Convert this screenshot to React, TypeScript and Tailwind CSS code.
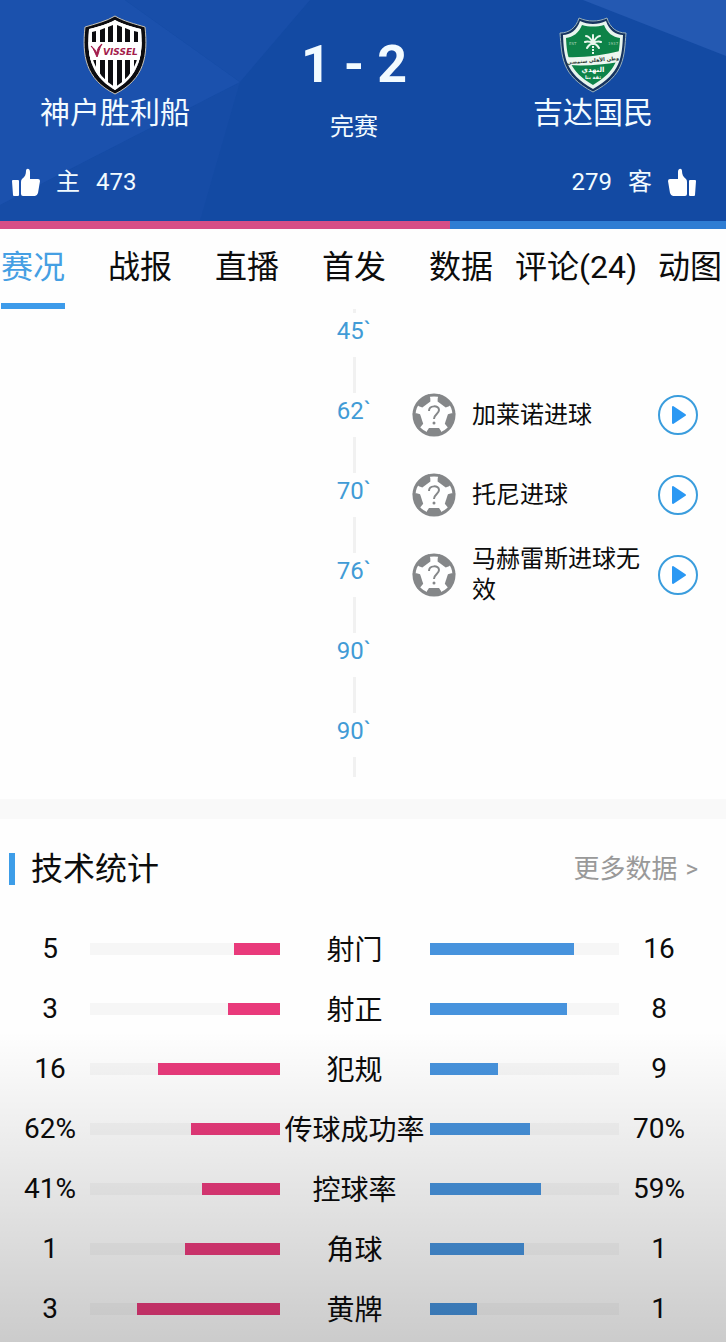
import { twMerge } from "tailwind-merge";

const tabs = ["赛况", "战报", "直播", "首发", "数据", "评论(24)", "动图"];

const events = [
	{ time: "45`" },
	{ time: "62`", text: "加莱诺进球" },
	{ time: "70`", text: "托尼进球" },
	{ time: "76`", text: "马赫雷斯进球无效" },
	{ time: "90`" },
	{ time: "90`" },
];

const stats = [
	{ label: "射门", home: 5, away: 16 },
	{ label: "射正", home: 3, away: 8 },
	{ label: "犯规", home: 16, away: 9 },
	{ label: "传球成功率", home: 62, away: 70, unit: "%" },
	{ label: "控球率", home: 41, away: 59, unit: "%" },
	{ label: "角球", home: 1, away: 1 },
	{ label: "黄牌", home: 3, away: 1 },
];

function HeaderBackdrop() {
	return (
		<svg
			className="absolute inset-0 h-full w-full -z-10"
			viewBox="0 0 726 221"
			preserveAspectRatio="none"
			aria-hidden="true"
		>
			<rect width="726" height="221" fill="#134aa3" />
			<path d="M0 205L240 82L200 221H0Z" fill="#164ca6" />
			<path d="M0 0H125L240 82L0 205Z" fill="#1b51ad" />
			<path d="M125 0H310L240 82Z" fill="#184ea9" />
			<path d="M583 0H726V56Z" fill="#2459b2" />
		</svg>
	);
}

function VisselCrest() {
	return (
		<svg width="66" height="80" viewBox="0 0 66 80" aria-label="Vissel Kobe">
			<defs>
				<clipPath id="vissel-inner">
					<path d="M33 5C40 9 50 12 59 14C61 38 59 60 33 75C7 60 5 38 7 14C16 12 26 9 33 5Z" />
				</clipPath>
			</defs>
			<path
				d="M33 1C41 6 53 9 63 12C66 40 63 64 33 79C3 64 0 40 3 12C13 9 25 6 33 1Z"
				fill="#0c0c10"
				stroke="#c9c4b8"
				strokeWidth="1"
			/>
			<g clipPath="url(#vissel-inner)">
				<rect width="66" height="80" fill="#fff" />
				{/* stripes stop short of the border, leaving a white rim */}
				<path
					d="M10 17L14 16V70H10ZM18 15L23 13V70H18ZM26 12L31 10V73H26ZM35 10L40 12V73H35ZM43 13L48 15V70H43ZM52 16L56 17V70H52Z"
					fill="#0c0c10"
				/>
				<path
					d="M33 6C40 10 50 13 58 15C60 38 58 59 33 74C8 59 6 38 8 15C16 13 26 10 33 6Z"
					fill="none"
					stroke="#fff"
					strokeWidth="3"
				/>
				<rect y="27" width="66" height="18" fill="#fff" />
			</g>
			<path
				d="M9 31C12 33 14 36 15 39C15 34 17 31 20 29C17 33 17 38 15 42C13 38 12 34 9 31Z"
				fill="#a31b4b"
				stroke="#a31b4b"
				strokeWidth="1"
			/>
			<text
				x="21"
				y="40"
				fontSize="9"
				fontWeight="700"
				fontStyle="italic"
				fontFamily="DejaVu Sans, sans-serif"
				fill="#a31b4b"
			>
				VISSEL
			</text>
		</svg>
	);
}

function AhliCrest() {
	return (
		<svg width="68" height="76" viewBox="0 0 68 76" aria-label="Al Ahli">
			<path
				d="M20 1C29 5 39 5 48 1C51 11 58 16 67 16C65 40 66 58 34 75C2 58 3 40 1 16C10 16 17 11 20 1Z"
				fill="#17345f"
				stroke="#9bb3bd"
				strokeWidth="1"
			/>
			<path
				d="M21 4C29 8 39 8 47 4C50 13 57 18 64 18C63 40 62 56 34 72C6 56 5 40 4 18C11 18 18 13 21 4Z"
				fill="#e8f4ee"
			/>
			<path
				d="M23 8C30 10 38 10 45 8C48 16 54 20 61 21C60 40 58 54 34 68C10 54 8 40 7 21C14 20 20 16 23 8Z"
				fill="#0d8348"
			/>
			<path d="M7 40C24 41 44 38 61 34L60 45C43 48 25 49 10 48Z" fill="#eef6f0" />
			<g stroke="#e8f6ec" strokeWidth="2" strokeLinecap="round" fill="none">
				<path d="M34 26V37" strokeDasharray="2 1" strokeLinecap="butt" />
				<path d="M34 26C31 20 29 19 27 19M34 26C37 20 39 19 41 19M34 26C30 24 28 24 26 25M34 26C38 24 40 24 42 25M34 26C31 27 29 29 28 31M34 26C37 27 39 29 40 31M34 25V18" />
			</g>
			<g fill="#a5d1b6" fontSize="4" fontFamily="DejaVu Sans, sans-serif">
				<text x="10" y="28">
					EST
				</text>
				<text x="49" y="28">
					1937
				</text>
			</g>
			<g
				fontFamily="DejaVu Sans, sans-serif"
				fontWeight="700"
				textAnchor="middle"
				fill="#fff"
			>
				<text x="34" y="45" fontSize="5" fill="#24342c" transform="rotate(-5 34 44)">
					وطن الأهلي سنمضي
				</text>
				<text x="34" y="55" fontSize="7">
					النهدي
				</text>
				<text x="34" y="62" fontSize="5">
					ثقة بنا
				</text>
			</g>
		</svg>
	);
}

function Thumb({ className }: { className?: string }) {
	return (
		<svg
			className={twMerge("text-white", className)}
			width="28"
			height="28"
			viewBox="0 0 28 28"
			fill="currentColor"
			aria-hidden="true"
		>
			<path d="M1 12H6Q7 12 7 13V27Q7 28 6 28H2Q1 28 1 27L0 13Q0 12 1 12Z" />
			<path d="M9 14Q9 12 10 11C13 9 14 6 14 3C14 0 18 0 18 4V11H26Q28 11 28 13L26 25Q25 28 23 28H11Q9 28 9 26Z" />
		</svg>
	);
}

function BallIcon() {
	return (
		<svg
			width="44"
			height="44"
			viewBox="0 0 44 44"
			className="shrink-0"
			aria-hidden="true"
		>
			<circle cx="22" cy="22" r="20" fill="#fff" stroke="#858789" strokeWidth="3" />
			{[0, 72, 144, 216, 288].map((angle) => (
				<path
					key={angle}
					d="M14 42L15 38L17 35H27L29 38L30 42Z"
					fill="#858789"
					transform={`rotate(${angle} 22 22)`}
				/>
			))}
			<path
				d="M17 18C17 12 27 12 27 17C27 21 22 21 22 26"
				fill="none"
				stroke="#858789"
				strokeWidth="2"
			/>
			<circle cx="22" cy="30" r="1.5" fill="#858789" />
		</svg>
	);
}

function PlayButton() {
	return (
		<button type="button" aria-label="播放" className="shrink-0">
			<svg width="40" height="40" viewBox="0 0 40 40">
				<circle cx="20" cy="20" r="19" fill="#fff" stroke="#3b9ddd" strokeWidth="2" />
				<path
					d="M15 12L27 20L15 28Z"
					fill="#2b98f3"
					stroke="#2b98f3"
					strokeWidth="2"
					strokeLinejoin="round"
				/>
			</svg>
		</button>
	);
}

function ScoreHeader() {
	return (
		<header className="relative z-0 pr-[18px] text-[#f2fbff]">
			<HeaderBackdrop />
			<div className="grid grid-cols-[230px_1fr_230px] pt-[15px]">
				<div className="flex flex-col items-center">
					<VisselCrest />
					<h2 className="text-[30px] leading-9">神户胜利船</h2>
				</div>
				<div className="flex flex-col items-center pt-5">
					<h1 className="text-[52px] leading-[60px] font-bold">1 - 2</h1>
					<p className="pt-4 text-2xl">完赛</p>
				</div>
				<div className="flex flex-col items-center">
					<div className="flex h-20 items-center">
						<AhliCrest />
					</div>
					<h2 className="text-[30px] leading-9">吉达国民</h2>
				</div>
			</div>
			<div className="flex justify-between pt-6 pb-6 pl-3 text-2xl leading-[30px]">
				<button type="button" className="flex items-center gap-4">
					<Thumb />
					<span>主</span>
					<span>473</span>
				</button>
				<button type="button" className="flex items-center gap-4 pr-3">
					<span>279</span>
					<span>客</span>
					<Thumb className="-scale-x-100" />
				</button>
			</div>
		</header>
	);
}

function Timeline() {
	return (
		<section className="pr-[18px] pb-1.5">
			<div className="mx-auto h-1 w-[3px] bg-[#f1f1f1]" />
			{events.map((event, i) => (
				<div key={i} className="grid h-20 grid-cols-[1fr_60px_1fr]">
					<div />
					<div className="flex flex-col items-center">
						<time className="flex h-11 items-center pb-2 text-2xl text-[#419bd6]">
							{event.time}
						</time>
						<div
							className={twMerge(
								"h-9 w-[3px] bg-[#f1f1f1]",
								i === events.length - 1 && "h-5"
							)}
						/>
					</div>
					{event.text && (
						<div className="flex h-11 items-center gap-4 pr-[10px] pl-7">
							<BallIcon />
							<p className="flex-1 text-2xl leading-[31px]">{event.text}</p>
							<PlayButton />
						</div>
					)}
				</div>
			))}
		</section>
	);
}

function Stats() {
	return (
		<section className="relative pb-1">
			<div className="flex items-center justify-between pt-7 pr-7 pl-[9px]">
				<h2 className="flex items-center gap-4 text-[32px] leading-[44px]">
					<span className="h-8 w-[6px] bg-[#3d9de8]" />
					技术统计
				</h2>
				<a href="#more" className="flex items-center gap-2 text-[26px] text-[#999]">
					更多数据 <span className="text-2xl">&gt;</span>
				</a>
			</div>
			<div className="pt-7 pr-[27px] pl-[10px]">
				<table className="w-full table-fixed text-[28px] leading-8">
					<colgroup>
						<col className="w-20" />
						<col />
						<col className="w-[150px]" />
						<col />
						<col className="w-20" />
					</colgroup>
					<tbody>
						{stats.map(({ label, home, away, unit }) => {
							const share = (home / (home + away)) * 100;
							return (
								<tr key={label} className="h-[60px] text-center">
									<td>
										{home}
										{unit}
									</td>
									<td>
										<div className="flex h-3 justify-end bg-[#f6f6f6]">
											<div className="bg-[#e93a7b]" style={{ width: `${share}%` }} />
										</div>
									</td>
									<th scope="row" className="pt-1 font-normal whitespace-nowrap">
										{label}
									</th>
									<td>
										<div className="flex h-3 bg-[#f6f6f6]">
											<div
												className="bg-[#4793dd]"
												style={{ width: `${100 - share}%` }}
											/>
										</div>
									</td>
									<td>
										{away}
										{unit}
									</td>
								</tr>
							);
						})}
					</tbody>
				</table>
			</div>
			{/* shade at the foot of the screen */}
			<div className="pointer-events-none absolute inset-x-0 bottom-0 h-[312px] bg-linear-to-t from-black/20 to-transparent" />
		</section>
	);
}

export default function App() {
	return (
		<main className="bg-[#fefefe] font-['Roboto','Noto_Sans_CJK_SC',sans-serif] text-[#0c0c0c]">
			<ScoreHeader />
			<div className="flex h-2 bg-[#2f7dd3]">
				<div className="w-[62%] bg-[#d74e86]" />
			</div>
			<nav className="grid grid-cols-[107fr_107fr_107fr_107fr_86fr_143fr_68fr] pl-px text-[32px] leading-[44px] whitespace-nowrap">
				{tabs.map((tab, i) => (
					<a
						key={tab}
						href={`#tab-${i}`}
						className={twMerge(
							"justify-self-start border-b-[6px] border-transparent pt-4 pb-[14px]",
							i === 0 && "border-[#3d9bea] text-[#459fe3]"
						)}
					>
						{tab}
					</a>
				))}
			</nav>
			<Timeline />
			<div className="h-5 bg-[#f9f9f9]" />
			<Stats />
		</main>
	);
}
